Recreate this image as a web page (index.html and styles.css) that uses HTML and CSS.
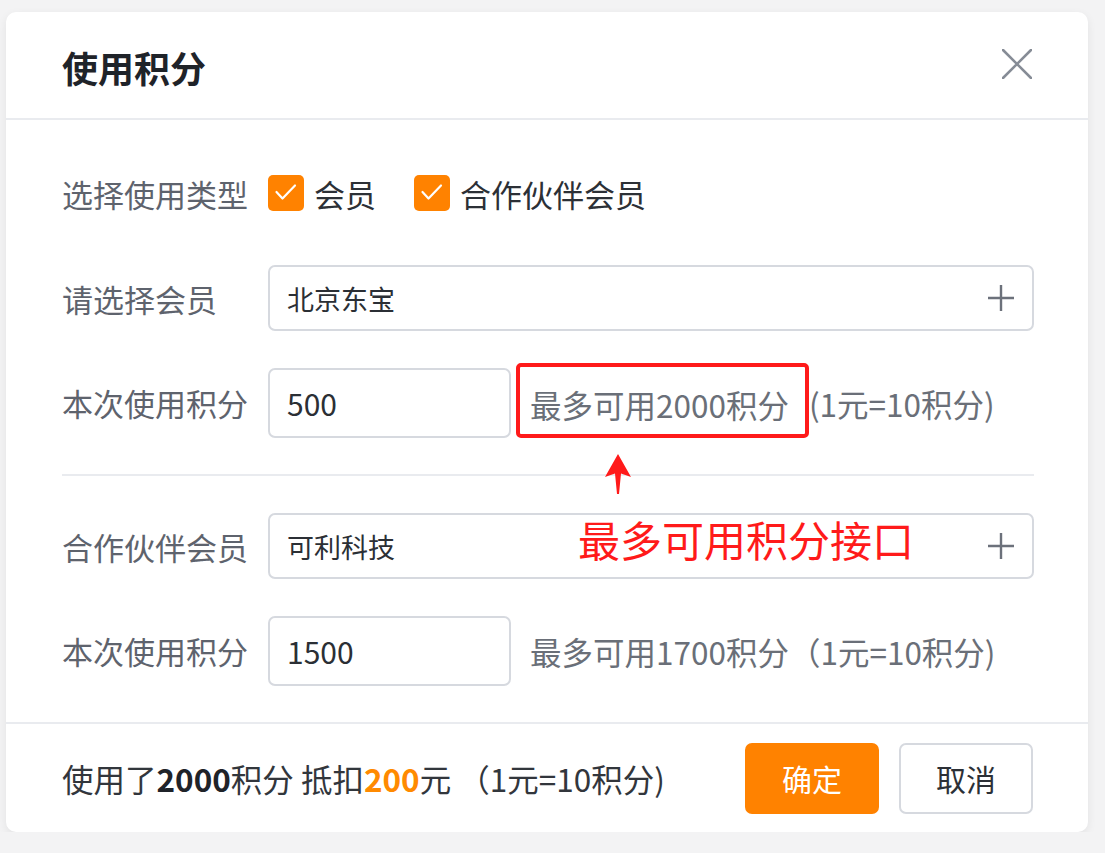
FILE: index.html
```html
<!DOCTYPE html>
<html lang="zh-CN">
<head>
    <meta charset="UTF-8">
    <meta name="viewport" content="width=device-width, initial-scale=1.0">
    <title>使用积分</title>
    <link rel="stylesheet" href="styles.css">
</head>
<body>
    <div class="dialog">
        <div class="dialog-header">
            <h2>使用积分</h2>
            <button class="close-btn" aria-label="关闭">
                <svg width="30" height="30" viewBox="0 0 30 30"><path d="M1 1 L29 29 M29 1 L1 29" stroke="#868c96" stroke-width="2.6" stroke-linecap="round"/></svg>
            </button>
        </div>

        <div class="dialog-body">
            <div class="row row-type">
                <span class="label">选择使用类型</span>
                <label class="check">
                    <span class="check-box"><svg width="36" height="36" viewBox="0 0 36 36"><path d="M8.5 17 L14.5 23.5 L27 10.5" fill="none" stroke="#fff" stroke-width="2.2" stroke-linecap="round" stroke-linejoin="round"/></svg></span>
                    会员
                </label>
                <label class="check">
                    <span class="check-box"><svg width="36" height="36" viewBox="0 0 36 36"><path d="M8.5 17 L14.5 23.5 L27 10.5" fill="none" stroke="#fff" stroke-width="2.2" stroke-linecap="round" stroke-linejoin="round"/></svg></span>
                    合作伙伴会员
                </label>
            </div>

            <div class="row">
                <span class="label">请选择会员</span>
                <div class="select">
                    <span>北京东宝</span>
                    <svg width="28" height="28" viewBox="0 0 28 28"><path d="M14 1 V27 M1 14 H27" stroke="#6c717b" stroke-width="2.4"/></svg>
                </div>
            </div>

            <div class="row row-points marked">
                <span class="label">本次使用积分</span>
                <div class="num-input">500</div>
                <span class="hint-mark">最多可用2000积分</span>
                <span class="hint">(1元=10积分)</span>
            </div>

            <div class="divider"></div>

            <div class="row">
                <span class="label">合作伙伴会员</span>
                <div class="select">
                    <span>可利科技</span>
                    <svg width="28" height="28" viewBox="0 0 28 28"><path d="M14 1 V27 M1 14 H27" stroke="#6c717b" stroke-width="2.4"/></svg>
                </div>
            </div>

            <div class="row row-points">
                <span class="label">本次使用积分</span>
                <div class="num-input">1500</div>
                <span class="hint gap">最多可用1700积分（1元=10积分)</span>
            </div>
        </div>

        <div class="dialog-footer">
            <p class="summary">使用了<b>2000</b>积分 抵扣<b class="amount">200</b>元 （1元=10积分)</p>
            <button class="btn btn-primary">确定</button>
            <button class="btn">取消</button>
        </div>

        <!-- annotation laid over the form -->
        <svg class="note-arrow" width="28" height="40" viewBox="0 0 28 40"><path d="M14 0 L27 23 L17 19.5 L15 40 L13 40 L11 19.5 L1 23 Z" fill="#ff1a1a"/></svg>
        <div class="note-text">最多可用积分接口</div>
    </div>
</body>
</html>
```

FILE: styles.css
```css
body {
    margin: 0;
    background: #f3f3f4;
    font-family: "Noto Sans CJK SC", "Noto Sans", sans-serif;
}
.dialog {
    position: relative;
    width: 1082px;
    margin: 12px 0 0 6px;
    background: #fff;
    border-radius: 10px;
    box-shadow: 0 3px 10px rgba(0,0,0,0.07);
}
.dialog-header {
    height: 108px;
    display: flex;
    align-items: center;
    justify-content: space-between;
    padding: 4px 56px 0 56px;
    box-sizing: border-box;
    border-bottom: 2px solid #e9ebef;
}
.dialog-header h2 {
    margin: 0;
    font-size: 36px;
    font-weight: 700;
    color: #1f2329;
}
.close-btn {
    border: none;
    background: none;
    padding: 0;
    width: 30px;
    height: 30px;
    margin-top: -6px;
    cursor: pointer;
}
.dialog-body {
    padding: 55px 54px 36px 56px;
    border-bottom: 2px solid #e9ebef;
}
.row {
    display: flex;
    align-items: center;
    margin-top: 37px;
}
.row-type {
    margin-top: 0;
    height: 36px;
}
.row-type + .row {
    margin-top: 54px;
}
.row.marked {
    margin-top: 32px;
    align-items: flex-end;
}
.label {
    width: 206px;
    flex-shrink: 0;
    font-size: 31px;
    color: #5e636d;
    white-space: nowrap;
}
.row-points .label {
    line-height: 70px;
}
.check {
    display: flex;
    align-items: center;
    gap: 10px;
    font-size: 31px;
    color: #2c3036;
    margin-right: 38px;
}
.check-box {
    width: 36px;
    height: 36px;
    border-radius: 5px;
    background: #ff8200;
    display: flex;
}
.select {
    flex: 1;
    height: 66px;
    display: flex;
    align-items: center;
    justify-content: space-between;
    padding: 0 17px;
    border: 2px solid #d6d9df;
    border-radius: 7px;
    box-sizing: border-box;
    font-size: 27px;
    color: #2b2f35;
}
.num-input {
    width: 243px;
    height: 70px;
    flex-shrink: 0;
    display: flex;
    align-items: center;
    padding: 0 17px;
    border: 2px solid #d6d9df;
    border-radius: 7px;
    box-sizing: border-box;
    font-size: 30px;
    color: #2b2f35;
}
.hint {
    font-size: 31.5px;
    color: #6a6f78;
    line-height: 70px;
    white-space: nowrap;
}
.hint.gap {
    margin-left: 19px;
}
.hint-mark {
    height: 75px;
    box-sizing: border-box;
    display: flex;
    align-items: center;
    margin-left: 5px;
    padding: 6px 16px 0 10px;
    border: 4px solid #ff1a1a;
    border-radius: 5px;
    font-size: 31.5px;
    color: #6a6f78;
    white-space: nowrap;
}
.divider {
    height: 2px;
    background: #e9ebef;
    margin-top: 36px;
}
.dialog-footer {
    height: 108px;
    display: flex;
    align-items: center;
    gap: 20px;
    padding: 0 55px 0 56px;
}
.summary {
    flex: 1;
    margin: 0;
    font-size: 31.5px;
    color: #32363c;
    white-space: nowrap;
}
.summary b {
    color: #1f2329;
}
.summary .amount {
    color: #ff8a00;
}
.btn {
    width: 134px;
    height: 71px;
    border: 2px solid #d6d9df;
    border-radius: 7px;
    background: #fff;
    font-family: inherit;
    font-size: 30px;
    color: #2c3036;
    cursor: pointer;
}
.btn-primary {
    background: #ff8200;
    border-color: #ff8200;
    color: #fff;
}
.note-arrow {
    position: absolute;
    left: 598px;
    top: 442px;
}
.note-text {
    position: absolute;
    left: 572px;
    top: 502px;
    font-size: 42px;
    line-height: 50px;
    color: #ff1a1a;
    white-space: nowrap;
}
```
